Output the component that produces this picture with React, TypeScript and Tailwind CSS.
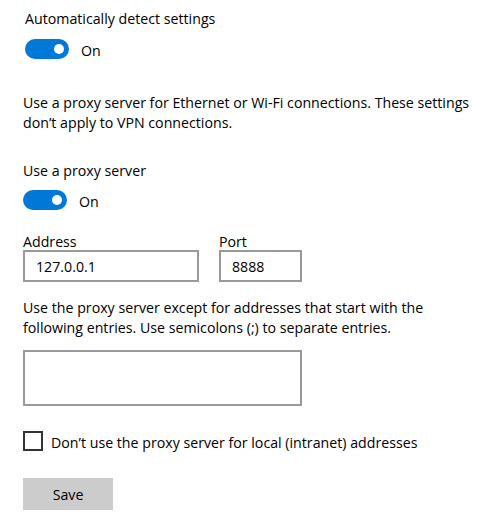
import React from "react";

function Toggle() {
  return (
    <div className="flex items-center h-[20px]">
      <div className="w-[44px] h-[20px] rounded-full bg-[#0078d7] flex items-center justify-end pr-[5px]">
        <div className="w-[10px] h-[10px] rounded-full bg-white" />
      </div>
      <span className="ml-[12px] h-[20px] leading-[20px] pt-[2px]">On</span>
    </div>
  );
}

export default function App() {
  return (
    <div
      className="w-[478px] h-[527px] bg-white text-black text-[14.2px] leading-[20px] pl-[23px] pt-[9px] whitespace-nowrap"
      style={{ fontFamily: '"Open Sans", "Noto Sans", sans-serif' }}
    >
      <div className="ml-[2px]">
        <div>Automatically detect settings</div>
        <div className="mt-[10px]">
          <Toggle />
        </div>
      </div>
      <p className="mt-[34px]">
        Use a proxy server for Ethernet or Wi-Fi connections. These settings
        <br />
        don’t apply to VPN connections.
      </p>
      <div className="mt-[28px]">Use a proxy server</div>
      <div className="mt-[9px]">
        <Toggle />
      </div>
      <div className="mt-[20px] flex gap-[20px]">
        <div className="flex flex-col">
          <div className="h-[20px] pt-[2px]">Address</div>
          <div className="w-[176px] h-[32px] border-2 border-[#999999] flex items-center pl-[11px] pt-[2px]">
            127.0.0.1
          </div>
        </div>
        <div className="flex flex-col">
          <div className="h-[20px] pt-[2px]">Port</div>
          <div className="w-[83px] h-[32px] border-2 border-[#999999] flex items-center pl-[11px] pt-[2px]">
            8888
          </div>
        </div>
      </div>
      <p className="mt-[16px]">
        Use the proxy server except for addresses that start with the
        <br />
        following entries. Use semicolons (;) to separate entries.
      </p>
      <div className="mt-[12px] w-[279px] h-[56px] border-2 border-[#999999]" />
      <div className="mt-[25px] flex items-center h-[20px]">
        <div className="w-[20px] h-[20px] border-2 border-[#333333]" />
        <span className="ml-[8px] h-[20px] pt-[2px]">Don’t use the proxy server for local (intranet) addresses</span>
      </div>
      <div className="mt-[27px] w-[90px] h-[32px] bg-[#cccccc] flex items-center justify-center pt-[2px]">
        Save
      </div>
    </div>
  );
}
